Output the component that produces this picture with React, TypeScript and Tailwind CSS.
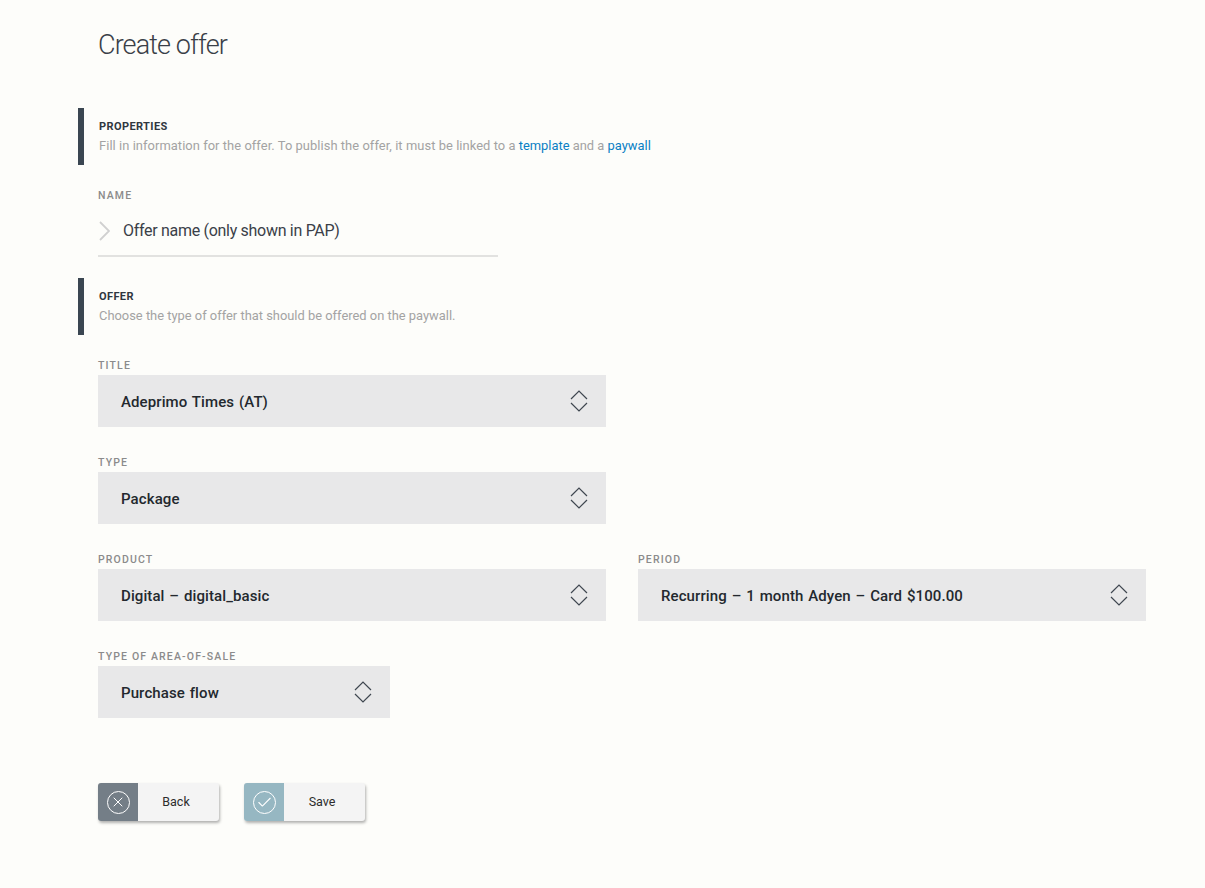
import { X, Check } from 'lucide-react'

function SectionHeader({ title, children }: { title: string; children: React.ReactNode }) {
  return (
    <div className="h-[57px] border-l-[6px] border-[#3a4651] pl-[15px] pt-[12px]">
      <h2 className="text-[11px] leading-[14px] font-bold tracking-[0.4px] text-[#2f3740]">{title}</h2>
      <p className="mt-[4px] text-[12.9px] leading-[15px] font-normal text-[#a3a3a3]">{children}</p>
    </div>
  )
}

function Label({ children }: { children: React.ReactNode }) {
  return <div className="text-[10.5px] leading-[12px] font-medium tracking-[1.15px] text-[#8b8b8b]">{children}</div>
}

function SelectField({ label, value, width }: { label: string; value: string; width: string }) {
  return (
    <div className={width}>
      <Label>{label}</Label>
      <div className="mt-[3px] flex h-[52px] items-center justify-between bg-[#e8e8e9] pl-[23px] pr-[18px]">
        <span className="pt-[2px] text-[15px] font-medium tracking-[0.1px] [word-spacing:1px] text-[#23282e]">{value}</span>
        <svg width="18" height="22" viewBox="0 0 18 22" fill="none" stroke="#3f4750" strokeWidth="1.2">
          <path d="M1 9 9 1l8 8" />
          <path d="M1 13l8 8 8-8" />
        </svg>
      </div>
    </div>
  )
}

function ActionButton({ label, color, icon }: { label: string; color: string; icon: React.ReactNode }) {
  return (
    <button className="flex h-[38px] w-[121px] overflow-hidden rounded-[3px] bg-[#f4f4f4] shadow-[1px_2px_3px_rgba(0,0,0,0.3)]">
      <span className={`flex h-full w-10 items-center justify-center ${color}`}>
        <span className="flex h-[23px] w-[23px] items-center justify-center rounded-full border-[1.5px] border-white">{icon}</span>
      </span>
      <span className="flex-1 pr-[5px] text-center text-[12.5px] leading-[38px] text-[#2c2c2c]">{label}</span>
    </button>
  )
}

export default function App() {
  return (
    <div className="min-h-[888px] bg-[#fdfdfa] pl-[78px] font-['Roboto',sans-serif]">
      <h1 className="pl-5 pt-[27px] text-[27px] leading-[36px] font-light tracking-[-0.9px] text-[#3a4048]">Create offer</h1>

      <div className="mt-[45px]">
        <SectionHeader title="PROPERTIES">
          <span className="tracking-[0.06px]">Fill in information for the offer. To publish the offer, it must be linked to a</span>{' '}
          <a className="text-[#0a7fc4]">template</a> and a <a className="text-[#0a7fc4]">paywall</a>
        </SectionHeader>
      </div>

      <div className="ml-5 mt-[25px] w-[400px]">
        <Label>NAME</Label>
        <div className="mt-2 flex h-[47px] items-center gap-[13px] border-b-2 border-[#e2e2e0] pb-1">
          <svg width="12" height="20" viewBox="0 0 12 20" fill="none" stroke="#d0d0d0" strokeWidth="1.8">
            <path d="M2 1l9 9-9 9" />
          </svg>
          <span className="text-[16px] tracking-[-0.3px] text-[#3a4048]">Offer name (only shown in PAP)</span>
        </div>
      </div>

      <div className="mt-[21px]">
        <SectionHeader title="OFFER">Choose the type of offer that should be offered on the paywall.</SectionHeader>
      </div>

      <div className="ml-5 mt-[25px] flex flex-col gap-[30px]">
        <SelectField label="TITLE" value="Adeprimo Times (AT)" width="w-[508px]" />
        <SelectField label="TYPE" value="Package" width="w-[508px]" />
        <div className="flex gap-8">
          <SelectField label="PRODUCT" value="Digital – digital_basic" width="w-[508px]" />
          <SelectField label="PERIOD" value="Recurring – 1 month Adyen – Card $100.00" width="w-[508px]" />
        </div>
        <SelectField label="TYPE OF AREA-OF-SALE" value="Purchase flow" width="w-[292px]" />
      </div>

      <div className="ml-5 mt-[65px] flex gap-[25px]">
        <ActionButton label="Back" color="bg-[#747e87]" icon={<X size={16} color="white" strokeWidth={1.5} />} />
        <ActionButton label="Save" color="bg-[#96b7c2]" icon={<Check size={17} color="white" strokeWidth={1.5} />} />
      </div>
    </div>
  )
}
